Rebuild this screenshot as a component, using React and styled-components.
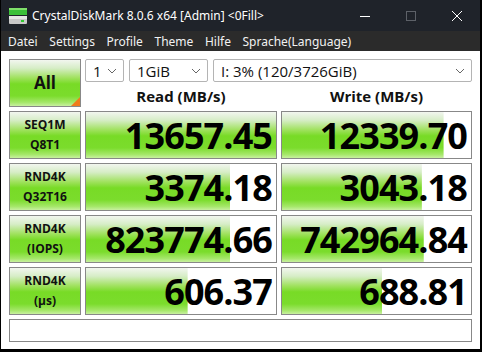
import React from 'react';
import styled, { createGlobalStyle } from 'styled-components';

const Global = createGlobalStyle`
  html, body { margin: 0; padding: 0; background: #fff; }
  body { width: 482px; height: 352px; overflow: hidden; }
`;

const Window = styled.div`
  width: 482px;
  height: 352px;
  box-sizing: border-box;
  border-left: 1px solid #000;
  border-right: 2px solid #000;
  border-bottom: 3px solid #000;
  display: flex;
  flex-direction: column;
  background: #fff;
  font-family: "Open Sans", "Noto Sans", sans-serif;
`;

const TitleBar = styled.div`
  height: 31px;
  flex: none;
  background: #1f232a;
  display: flex;
  align-items: center;
  padding-left: 8px;
  color: #fff;
  font-family: "Noto Sans", sans-serif;
  font-size: 12px;
`;

const Title = styled.span`
  margin-left: 5px;
  flex: 1;
`;

const WinButton = styled.div`
  width: 46px;
  height: 31px;
  display: flex;
  align-items: center;
  justify-content: center;
`;

const MenuBar = styled.div`
  height: 20px;
  flex: none;
  background: #2b2b2b;
  display: flex;
  align-items: center;
  padding-left: 7px;
  gap: 11.6px;
  color: #f2f2f2;
  font-family: "Noto Sans", sans-serif;
  font-size: 12px;
`;

const Content = styled.div`
  flex: 1;
  display: grid;
  grid-template-columns: 72px 192px 191px;
  grid-template-rows: 48px 48px 48px 48px 48px 23px;
  column-gap: 4px;
  row-gap: 4px;
  padding: 8px 0 0 8px;
`;

const greenGrad = `linear-gradient(to bottom, #f2f6ef 0%, #d6edc6 18%, #a2e262 38%, #78db26 52%, #7bdc2c 78%, #a4e768 92%, #c8f0a0 100%)`;

const Tile = styled.div`
  box-sizing: border-box;
  border: 1px solid #888;
  background: ${greenGrad};
  display: flex;
  flex-direction: column;
  align-items: center;
  justify-content: center;
  color: #111;
  font-weight: 700;
  font-size: 12px;
  line-height: 20px;
  position: relative;
`;

const AllButton = styled(Tile)`
  font-size: 17px;
  &::after {
    content: "";
    position: absolute;
    right: 0;
    bottom: 0;
    border-style: solid;
    border-width: 0 0 9px 9px;
    border-color: transparent transparent #f07c1c transparent;
  }
`;

const HeadArea = styled.div`
  grid-column: 2 / 4;
  display: flex;
  flex-direction: column;
`;

const Combos = styled.div`
  display: flex;
  gap: 5px;
  height: 23px;
`;

const Combo = styled.div`
  box-sizing: border-box;
  width: ${p => p.$w}px;
  height: 23px;
  border: 1px solid #b4b4b4;
  border-radius: 2px;
  display: flex;
  align-items: center;
  justify-content: space-between;
  padding: 0 6px 0 7px;
  font-size: 15px;
  color: #111;
  background: #fff;
`;

const Headers = styled.div`
  display: grid;
  grid-template-columns: 192px 191px;
  column-gap: 4px;
  flex: 1;
  align-items: center;
  padding-top: 3px;
`;

const Header = styled.div`
  text-align: center;
  font-weight: 700;
  font-size: 15px;
  color: #111;
`;

const Value = styled.div`
  box-sizing: border-box;
  border: 1px solid #888;
  background: ${greenGrad};
  background-color: #fff;
  background-repeat: no-repeat;
  background-size: ${p => p.$fill}% 100%;
  display: flex;
  align-items: center;
  justify-content: flex-end;
  padding-right: 4px;
  font-weight: 700;
  font-size: 36px;
  color: #000;
  letter-spacing: -0.9px;
`;

const Status = styled.div`
  grid-column: 1 / 4;
  box-sizing: border-box;
  border: 1px solid #888;
`;

const Chevron = () => (
  <svg width="10" height="6" viewBox="0 0 10 6">
    <path d="M1 1 L5 5 L9 1" fill="none" stroke="#666" strokeWidth="1" />
  </svg>
);

const AppIcon = () => (
  <svg width="18" height="16" viewBox="0 0 18 16">
    <rect x="0" y="0" width="18" height="7" fill="#3cc03a" />
    <rect x="0" y="0" width="18" height="2" fill="#7fe06a" />
    <rect x="0" y="8" width="18" height="8" rx="1" fill="#c8c8c8" />
    <rect x="0" y="8" width="18" height="3" fill="#e6e6e6" />
    <rect x="12" y="12" width="3" height="2" fill="#2ec82e" />
  </svg>
);

const rows = [
  { l1: 'SEQ1M', l2: 'Q8T1', r: '13657.45', rf: 100, w: '12339.70', wf: 85.5 },
  { l1: 'RND4K', l2: 'Q32T16', r: '3374.18', rf: 76, w: '3043.18', wf: 74 },
  { l1: 'RND4K', l2: '(IOPS)', r: '823774.66', rf: 76, w: '742964.84', wf: 75 },
  { l1: 'RND4K', l2: '(µs)', r: '606.37', rf: 53.5, w: '688.81', wf: 53 },
];

export default function App() {
  return (
    <>
      <Global />
      <Window>
        <TitleBar>
          <AppIcon />
          <Title>CrystalDiskMark 8.0.6 x64 [Admin] &lt;0Fill&gt;</Title>
          <WinButton>
            <svg width="10" height="10" viewBox="0 0 10 10"><path d="M0 5.5 H10" stroke="#fff" strokeWidth="1" /></svg>
          </WinButton>
          <WinButton>
            <svg width="10" height="10" viewBox="0 0 10 10"><rect x="0.5" y="0.5" width="9" height="9" fill="none" stroke="#5d6168" strokeWidth="1" /></svg>
          </WinButton>
          <WinButton>
            <svg width="10" height="10" viewBox="0 0 10 10"><path d="M0 0 L10 10 M10 0 L0 10" stroke="#fff" strokeWidth="1" /></svg>
          </WinButton>
        </TitleBar>
        <MenuBar>
          <span>Datei</span>
          <span>Settings</span>
          <span>Profile</span>
          <span>Theme</span>
          <span>Hilfe</span>
          <span>Sprache(Language)</span>
        </MenuBar>
        <Content>
          <AllButton>All</AllButton>
          <HeadArea>
            <Combos>
              <Combo $w={39}><span>1</span><Chevron /></Combo>
              <Combo $w={79}><span>1GiB</span><Chevron /></Combo>
              <Combo $w={259}><span>I: 3% (120/3726GiB)</span><Chevron /></Combo>
            </Combos>
            <Headers>
              <Header>Read (MB/s)</Header>
              <Header>Write (MB/s)</Header>
            </Headers>
          </HeadArea>
          {rows.map((r, i) => (
            <React.Fragment key={i}>
              <Tile><span>{r.l1}</span><span>{r.l2}</span></Tile>
              <Value $fill={r.rf}>{r.r}</Value>
              <Value $fill={r.wf}>{r.w}</Value>
            </React.Fragment>
          ))}
          <Status />
        </Content>
      </Window>
    </>
  );
}
